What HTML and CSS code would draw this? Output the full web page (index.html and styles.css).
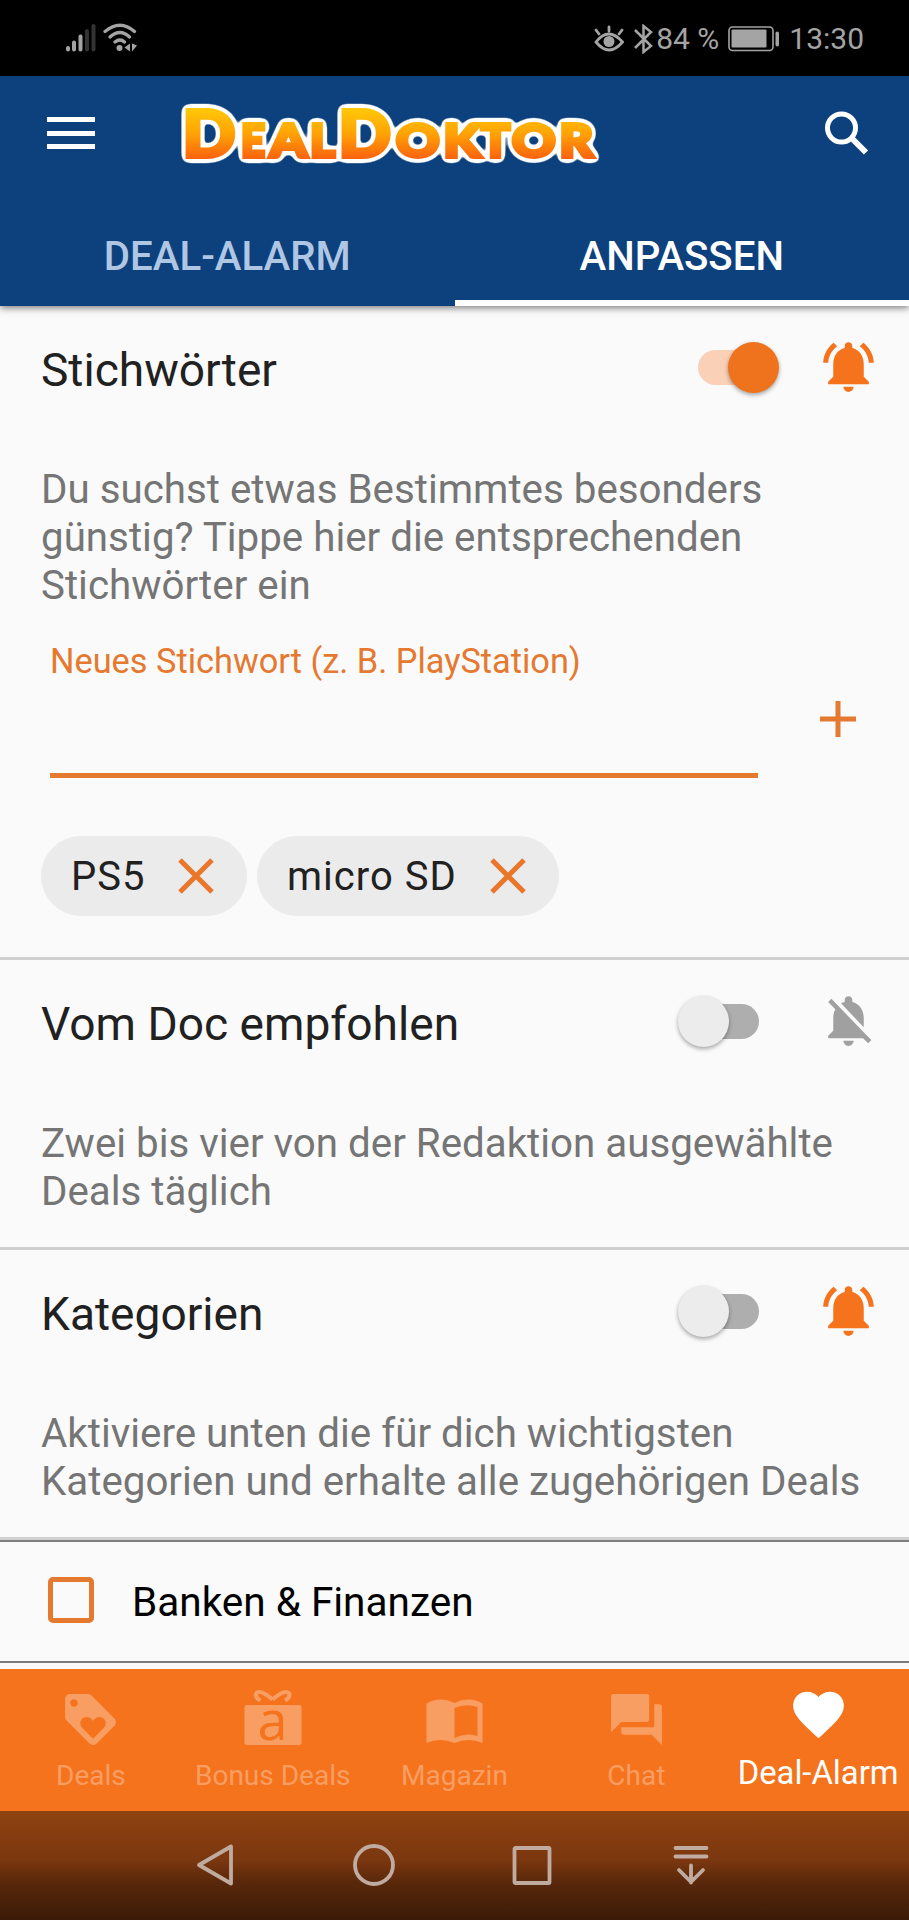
FILE: index.html
```html
<!DOCTYPE html>
<html lang="de">
<head>
<meta charset="utf-8">
<title>DealDoktor</title>
<link rel="stylesheet" href="styles.css">
</head>
<body>
<svg class="defs" width="0" height="0" aria-hidden="true">
  <symbol id="bell" viewBox="0 0 24 24"><path d="M7.58 4.08L6.15 2.65C3.75 4.48 2.17 7.3 2.03 10.5h2c.15-2.65 1.51-4.97 3.55-6.42zm12.39 6.42h2c-.15-3.2-1.73-6.02-4.12-7.85l-1.42 1.43c2.02 1.45 3.39 3.77 3.54 6.42zM18 11c0-3.07-1.64-5.64-4.5-6.32V4c0-.83-.67-1.5-1.5-1.5s-1.5.67-1.5 1.5v.68C7.63 5.36 6 7.92 6 11v5l-2 2v1h16v-1l-2-2v-5zm-6 11c.14 0 .27-.01.4-.04.65-.14 1.18-.58 1.44-1.18.1-.24.15-.5.15-.78h-4c.01 1.1.9 2 2.01 2z"/></symbol>
  <symbol id="cross" viewBox="0 0 36 36"><path d="M2 2L34 34M34 2L2 34" fill="none" stroke="currentColor" stroke-width="5"/></symbol>
</svg>
<header class="status">
  <svg class="status-left" width="76" height="32" viewBox="0 0 76 32">
    <g stroke-width="4" stroke-linecap="round" stroke="#a4a4a4"><path d="M4 25v1.500M10 19.500v7M16.500 13.500v13"/><path d="M23 8v18.500M29.500 3v23.500" stroke="#333"/></g>
    <g fill="none" stroke="#a4a4a4" stroke-width="3.200" stroke-linecap="round"><path d="M41 8.500Q56 -4 70.500 8.500M46 14Q56 5 65.500 14M51 19Q56 15 60.500 19"/></g>
    <circle cx="55.500" cy="25" r="3" fill="#a4a4a4"/><path d="M66 20.500v8l-5.500-4zM68 20.500v8l5-6z" fill="#a4a4a4"/>
  </svg>
  <div class="status-right">
    <svg width="30" height="28" viewBox="0 0 30 28"><g fill="none" stroke="#a4a4a4" stroke-width="2.800" stroke-linecap="round"><path d="M2 17Q14.500 1 28.500 17Q15 33 2 17zM15 2v4M2 5l3 4M28 5l-3 4"/></g><circle cx="15" cy="16.500" r="5.500" fill="#a4a4a4"/></svg>
    <svg class="bt" width="20" height="30" viewBox="0 0 20 30"><path d="M2 6l16 16-7.500 6V2L18 8 2 24" fill="none" stroke="#a4a4a4" stroke-width="2.500"/></svg>
    <span class="pct">84 %</span>
    <svg class="battery" width="52" height="26" viewBox="0 0 52 26"><rect x="1" y="1" width="44" height="23.500" rx="3.500" fill="none" stroke="#a4a4a4" stroke-width="1.600"/><rect x="3.500" y="3.500" width="35" height="18" rx="1" fill="#a4a4a4"/><rect x="47.500" y="5.500" width="3.500" height="15" rx="1.700" fill="#a4a4a4"/></svg>
    <span class="time">13:30</span>
  </div>
</header>
<div class="appbar">
  <div class="toolbar">
    <span class="menu"><i></i><i></i><i></i></span>
    <svg class="logo" width="430" height="70" viewBox="0 0 430 70" role="img" aria-label="DealDoktor">
      <defs>
        <linearGradient id="lg" gradientUnits="userSpaceOnUse" x1="0" y1="11" x2="0" y2="60"><stop offset="0" stop-color="#ffc808"/><stop offset=".5" stop-color="#ffa305"/><stop offset="1" stop-color="#fb640e"/></linearGradient>
        <filter id="outline" filterUnits="userSpaceOnUse" x="-5" y="-5" width="440" height="80" color-interpolation-filters="sRGB">
          <feGaussianBlur in="SourceAlpha" stdDeviation="3.300"/>
          <feComponentTransfer result="edge"><feFuncR type="linear" slope="0" intercept="1"/><feFuncG type="linear" slope="0" intercept="1"/><feFuncB type="linear" slope="0" intercept="1"/><feFuncA type="linear" slope="14" intercept="-.9"/></feComponentTransfer>
          <feMerge><feMergeNode in="edge"/><feMergeNode in="SourceGraphic"/></feMerge>
        </filter>
      </defs>
      <g class="logo-text" filter="url(#outline)">
        <text class="big" x="7.500" y="58.500" textLength="53" lengthAdjust="spacingAndGlyphs">D</text>
        <text class="small" x="66" y="58.500" textLength="24" lengthAdjust="spacingAndGlyphs">E</text>
        <text class="small" x="95" y="58.500" textLength="37" lengthAdjust="spacingAndGlyphs">A</text>
        <text class="small" x="135" y="58.500" textLength="25" lengthAdjust="spacingAndGlyphs">L</text>
        <text class="big" x="163.500" y="58.500" textLength="52.500" lengthAdjust="spacingAndGlyphs">D</text>
        <text class="small" x="221" y="58.500" textLength="43.500" lengthAdjust="spacingAndGlyphs">O</text>
        <text class="small" x="268.500" y="58.500" textLength="37" lengthAdjust="spacingAndGlyphs">K</text>
        <text class="small" x="306" y="58.500" textLength="29" lengthAdjust="spacingAndGlyphs">T</text>
        <text class="small" x="337" y="58.500" textLength="43.500" lengthAdjust="spacingAndGlyphs">O</text>
        <text class="small" x="384.500" y="58.500" textLength="33.500" lengthAdjust="spacingAndGlyphs">R</text>
      </g>
    </svg>
    <svg class="search" width="46" height="46" viewBox="0 0 46 46"><circle cx="18.500" cy="18" r="14" fill="none" stroke="#fff" stroke-width="5"/><path d="M29 28.500L43 42.500" stroke="#fff" stroke-width="6"/></svg>
  </div>
  <nav class="tabs"><span class="tab">DEAL-ALARM</span><span class="tab active">ANPASSEN</span></nav>
</div>
<main>
  <section class="group keywords">
    <div class="head"><h2>Stichwörter</h2><span class="switch on"></span><svg class="bell"><use href="#bell"/></svg></div>
    <p>Du suchst etwas Bestimmtes besonders<br>günstig? Tippe hier die entsprechenden<br>Stichwörter ein</p>
    <div class="entry"><label class="field">Neues Stichwort (z. B. PlayStation)</label><svg class="plus" width="36" height="36" viewBox="0 0 36 36"><path d="M18 0v36M0 18h36" stroke="currentColor" stroke-width="5"/></svg></div>
    <div class="chips">
      <span class="chip c1"><span>PS5</span><svg><use href="#cross"/></svg></span>
      <span class="chip c2"><span>micro SD</span><svg><use href="#cross"/></svg></span>
    </div>
  </section>
  <section class="group doc">
    <div class="head"><h2>Vom Doc empfohlen</h2><span class="switch"></span><svg class="bell off" viewBox="0 0 24 24"><path d="M20 18.690L7.840 6.140 5.270 3.490 4 4.760l2.800 2.800v.010c-.52.990-.8 2.160-.8 3.420v5l-2 2v1h13.730l2 2L21 19.720l-1-1.030zM12 22c1.110 0 2-.89 2-2h-4c0 1.110.89 2 2 2zm6-7.320V11c0-3.080-1.640-5.640-4.500-6.320V4c0-.83-.67-1.500-1.500-1.500s-1.500.67-1.500 1.500v.68c-.15.030-.29.080-.42.120-.1.030-.2.070-.3.110h-.010c-.010 0-.010 0-.020.010-.23.090-.46.200-.68.310 0 0-.010 0-.010.010L18 14.680z"/></svg></div>
    <p>Zwei bis vier von der Redaktion ausgewählte<br>Deals täglich</p>
  </section>
  <section class="group cats">
    <div class="head"><h2>Kategorien</h2><span class="switch"></span><svg class="bell"><use href="#bell"/></svg></div>
    <p>Aktiviere unten die für dich wichtigsten<br>Kategorien und erhalte alle zugehörigen Deals</p>
  </section>
  <div class="row"><span class="box"></span><span class="row-name">Banken &amp; Finanzen</span></div>
</main>
<nav class="bottom">
  <span class="item"><svg width="61" height="61" viewBox="0 0 24 24"><path fill-rule="evenodd" d="M21.410 11.580l-9-9C12.050 2.220 11.550 2 11 2H4c-1.100 0-2 .9-2 2v7c0 .55.220 1.050.590 1.420l9 9c.36.360.860.580 1.410.580s1.050-.22 1.410-.59l7-7c.37-.36.590-.86.590-1.410s-.23-1.060-.59-1.420zM5.500 7C4.670 7 4 6.330 4 5.500S4.670 4 5.500 4 7 4.670 7 5.500 6.330 7 5.500 7zm11.770 8.270L13 19.540l-4.270-4.270C8.280 14.810 8 14.190 8 13.500c0-1.380 1.120-2.500 2.500-2.500.69 0 1.320.280 1.770.740l.73.720.73-.73c.45-.45 1.080-.73 1.770-.73 1.380 0 2.500 1.120 2.500 2.500 0 .69-.28 1.320-.73 1.770z"/></svg>Deals</span>
  <span class="item"><svg class="gift" width="61" height="61" viewBox="0 0 61 61"><rect x="2.500" y="16" width="57" height="40" rx="2.500"/><path d="M30.500 10.500Q17 -1 14 5Q13 9 18.500 11.500M30.500 10.500Q44 -1 47.500 5Q48 9 43 11.500" fill="none" stroke="currentColor" stroke-width="4"/><text x="30.500" y="50.500" class="a">a</text></svg>Bonus Deals</span>
  <span class="item"><svg width="61" height="61" viewBox="0 0 61 61"><path d="M2.500 14.500Q16 7 30.500 14Q45 7 58.500 14.500V54Q45 48 30.500 54Q16 48 2.500 54zM30.500 19V49Q42 43 53.500 47V18Q42 14 30.500 19z" fill-rule="evenodd"/></svg>Magazin</span>
  <span class="item"><svg width="61" height="61" viewBox="0 0 24 24"><path d="M21 6h-2v9H6v2c0 .55.450 1 1 1h11l4 4V7c0-.55-.45-1-1-1zm-4 6V3c0-.55-.45-1-1-1H3c-.55 0-1 .450-1 1v14l4-4h10c.55 0 1-.45 1-1z"/></svg>Chat</span>
  <span class="item active"><svg width="61" height="61" viewBox="0 0 24 24"><path d="M12 21.350l-1.450-1.320C5.400 15.360 2 12.280 2 8.500 2 5.420 4.420 3 7.500 3c1.740 0 3.410.810 4.500 2.090C13.090 3.810 14.760 3 16.500 3 19.580 3 22 5.420 22 8.500c0 3.780-3.400 6.860-8.550 11.540L12 21.350z"/></svg>Deal-Alarm</span>
</nav>
<footer class="sysnav">
  <svg width="44" height="44" viewBox="0 0 44 44"><path d="M6 22L38 3.500V40.500z"/></svg>
  <svg width="44" height="44" viewBox="0 0 44 44"><circle cx="22" cy="22" r="19"/></svg>
  <svg width="44" height="44" viewBox="0 0 44 44"><rect x="4.500" y="5" width="35" height="35" rx="1"/></svg>
  <svg width="44" height="44" viewBox="0 0 44 44"><path d="M6.500 5h31M6.500 13.500h31M22 22.500v17M10 27l12 12 12-12" stroke-linecap="round"/></svg>
</footer>
</body>
</html>
```
FILE: styles.css
```css
* { box-sizing: border-box; }
body { margin: 0; width: 909px; height: 1920px; overflow: hidden; background: #fafafa; font-family: Roboto, sans-serif; display: flex; flex-direction: column; }
svg { display: block; fill: currentColor; flex: none; }
.defs { position: absolute; }
.status { height: 76px; flex: none; background: #000; color: #a4a4a4; display: flex; justify-content: space-between; padding: 0 45px 0 64px; }
.status-left { margin-top: 23px; }
.status-right { display: flex; align-items: center; height: 77px; font-size: 30px; }
.bt { margin-left: 9px; }
.pct { margin-left: 3px; font-size: 30px; }
.battery { margin-left: 9px; }
.time { margin-left: 9px; }
.appbar { height: 230px; flex: none; background: #0d417e; color: #fff; position: relative; box-shadow: 0 2px 7px rgba(0, 0, 0, .5); }
.toolbar { height: 114px; display: flex; align-items: center; padding-left: 47px; }
.menu { width: 48px; height: 32px; display: flex; flex-direction: column; justify-content: space-between; }
.menu i { height: 5px; background: #fff; }
.logo { margin-left: 80px; overflow: visible; }
.logo-text { font-family: Lato, sans-serif; font-weight: 900; fill: url(#lg); stroke: url(#lg); stroke-width: 4px; }
.big { font-size: 64px; }
.small { font-size: 46.500px; }
.search { margin-left: 218px; }
.tabs { height: 116px; display: grid; grid-template-columns: 1fr 1fr; font-size: 40.200px; font-weight: 500; }
.tab { display: flex; align-items: center; justify-content: center; padding-top: 17px; color: #b0c7e3; }
.tab.active { color: #fff; border-bottom: 6px solid #fff; padding-top: 23px; }
main { height: 1363px; flex: none; }
.group { padding-left: 41px; border-bottom: 3px solid #d0d0d0; }
.head { display: flex; align-items: flex-start; height: 92px; padding-top: 30px; }
h2 { margin: 0; font-size: 46.100px; font-weight: 400; line-height: 56px; padding-top: 6px; color: #212121; flex: 1; }
.switch { width: 82px; height: 51px; position: relative; margin: 6px 58px 0 0; }
.switch::before { content: ""; position: absolute; left: 16px; top: 8px; width: 65px; height: 35px; border-radius: 18px; background: #aeaeae; }
.switch::after { content: ""; position: absolute; left: 0; top: 0; width: 51px; height: 51px; border-radius: 50%; background: #ececec; box-shadow: 0 2px 4px rgba(0, 0, 0, .35); }
.switch.on { margin-right: 39px; }
.switch.on::before { left: 1px; background: #fad0b6; }
.switch.on::after { left: 31px; background: #ef721d; }
.bell { width: 61px; height: 61px; color: #f5731d; margin-right: 30px; }
.bell.off { color: #a0a0a0; }
p { margin: 0; padding-top: 68px; font-size: 40.300px; line-height: 48px; color: #757575; white-space: nowrap; }
.keywords { height: 654px; }
.entry { display: flex; align-items: flex-start; height: 175px; padding-top: 16px; color: #e4792f; }
.field { width: 708px; height: 152px; margin-left: 9px; border-bottom: 5px solid; font-size: 34.350px; line-height: 40px; padding-top: 15px; }
.plus { margin: 75px 0 0 62px; }
.chips { display: flex; gap: 10px; margin-top: 51px; }
.chip { height: 80px; border-radius: 40px; background: #ebebeb; color: #212121; font-size: 40px; letter-spacing: 1px; display: flex; align-items: center; justify-content: space-between; padding: 0 33px 0 30px; }
.chip svg { width: 36px; height: 36px; color: #ea762a; }
.c1 { width: 206px; }
.c2 { width: 302px; }
.doc { height: 290px; }
.cats { height: 290px; }
.row { height: 123px; border-top: 2px solid #7d7d7d; border-bottom: 2px solid #7d7d7d; display: flex; align-items: center; padding: 0 0 3px 48px; gap: 38px; font-size: 40.500px; color: #000; }
.row-name { padding-top: 4px; }
.box { width: 46px; height: 46px; border: 5px solid #e4792f; border-radius: 5px; }
.bottom { height: 142px; flex: none; background: #f5731d; display: grid; grid-template-columns: repeat(5, 1fr); color: #f99e62; font-size: 28px; }
.item { display: flex; flex-direction: column; align-items: center; padding-top: 20px; line-height: 34px; gap: 9px; white-space: nowrap; }
.item.active { color: #fff; font-size: 32.800px; padding-top: 15px; gap: 11px; }
.gift { overflow: visible; }
.a { font-family: "Open Sans", sans-serif; font-size: 54px; line-height: 1; text-anchor: middle; fill: #f5731d; }
.sysnav { height: 109px; flex: none; background: linear-gradient(#8f4310, #7b370f 45%, #5a280b 65%, #3a1a07); display: flex; align-items: flex-start; gap: 114.500px; padding: 32px 0 0 193px; color: #c0aba1; }
.sysnav svg { fill: none; stroke: currentColor; stroke-width: 3.800; stroke-linejoin: round; }
```
